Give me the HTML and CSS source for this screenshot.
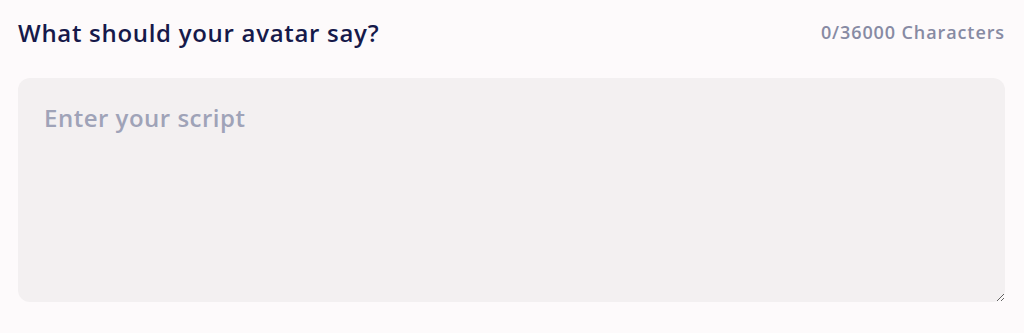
FILE: index.html
```html
<!DOCTYPE html>
<html lang="en">
<head>
    <meta charset="UTF-8">
    <meta name="viewport" content="width=device-width, initial-scale=1.0">
    <title>Script</title>
    <link rel="stylesheet" href="styles.css">
</head>
<body>
    <div class="script-box">
        <div class="script-header">
            <h2>What should your avatar say?</h2>
            <span class="counter">0/36000 Characters</span>
        </div>
        <textarea class="script-input" placeholder="Enter your script"></textarea>
    </div>
</body>
</html>
```

FILE: styles.css
```css
body {
    margin: 0;
    background-color: #fdfafb;
    font-family: "Open Sans", "Noto Sans", sans-serif;
}
.script-box {
    padding: 14px 19px 0 18px;
}
.script-header {
    display: flex;
    justify-content: space-between;
    align-items: center;
    height: 36px;
}
.script-header h2 {
    margin: 0;
    font-size: 24px;
    font-weight: 600;
    letter-spacing: 0.7px;
    color: #16194a;
}
.counter {
    font-size: 18px;
    font-weight: 600;
    letter-spacing: 0.9px;
    color: #878aa3;
}
.script-input {
    display: block;
    box-sizing: border-box;
    width: 100%;
    height: 224px;
    margin-top: 28px;
    padding: 23px 26px;
    border: none;
    border-radius: 12px;
    background-color: #f3f0f1;
    font-family: inherit;
    font-size: 24px;
    font-weight: 600;
    letter-spacing: 0.5px;
    color: #16194a;
    outline: none;
}
.script-input::placeholder {
    color: #9fa3b8;
}
```
